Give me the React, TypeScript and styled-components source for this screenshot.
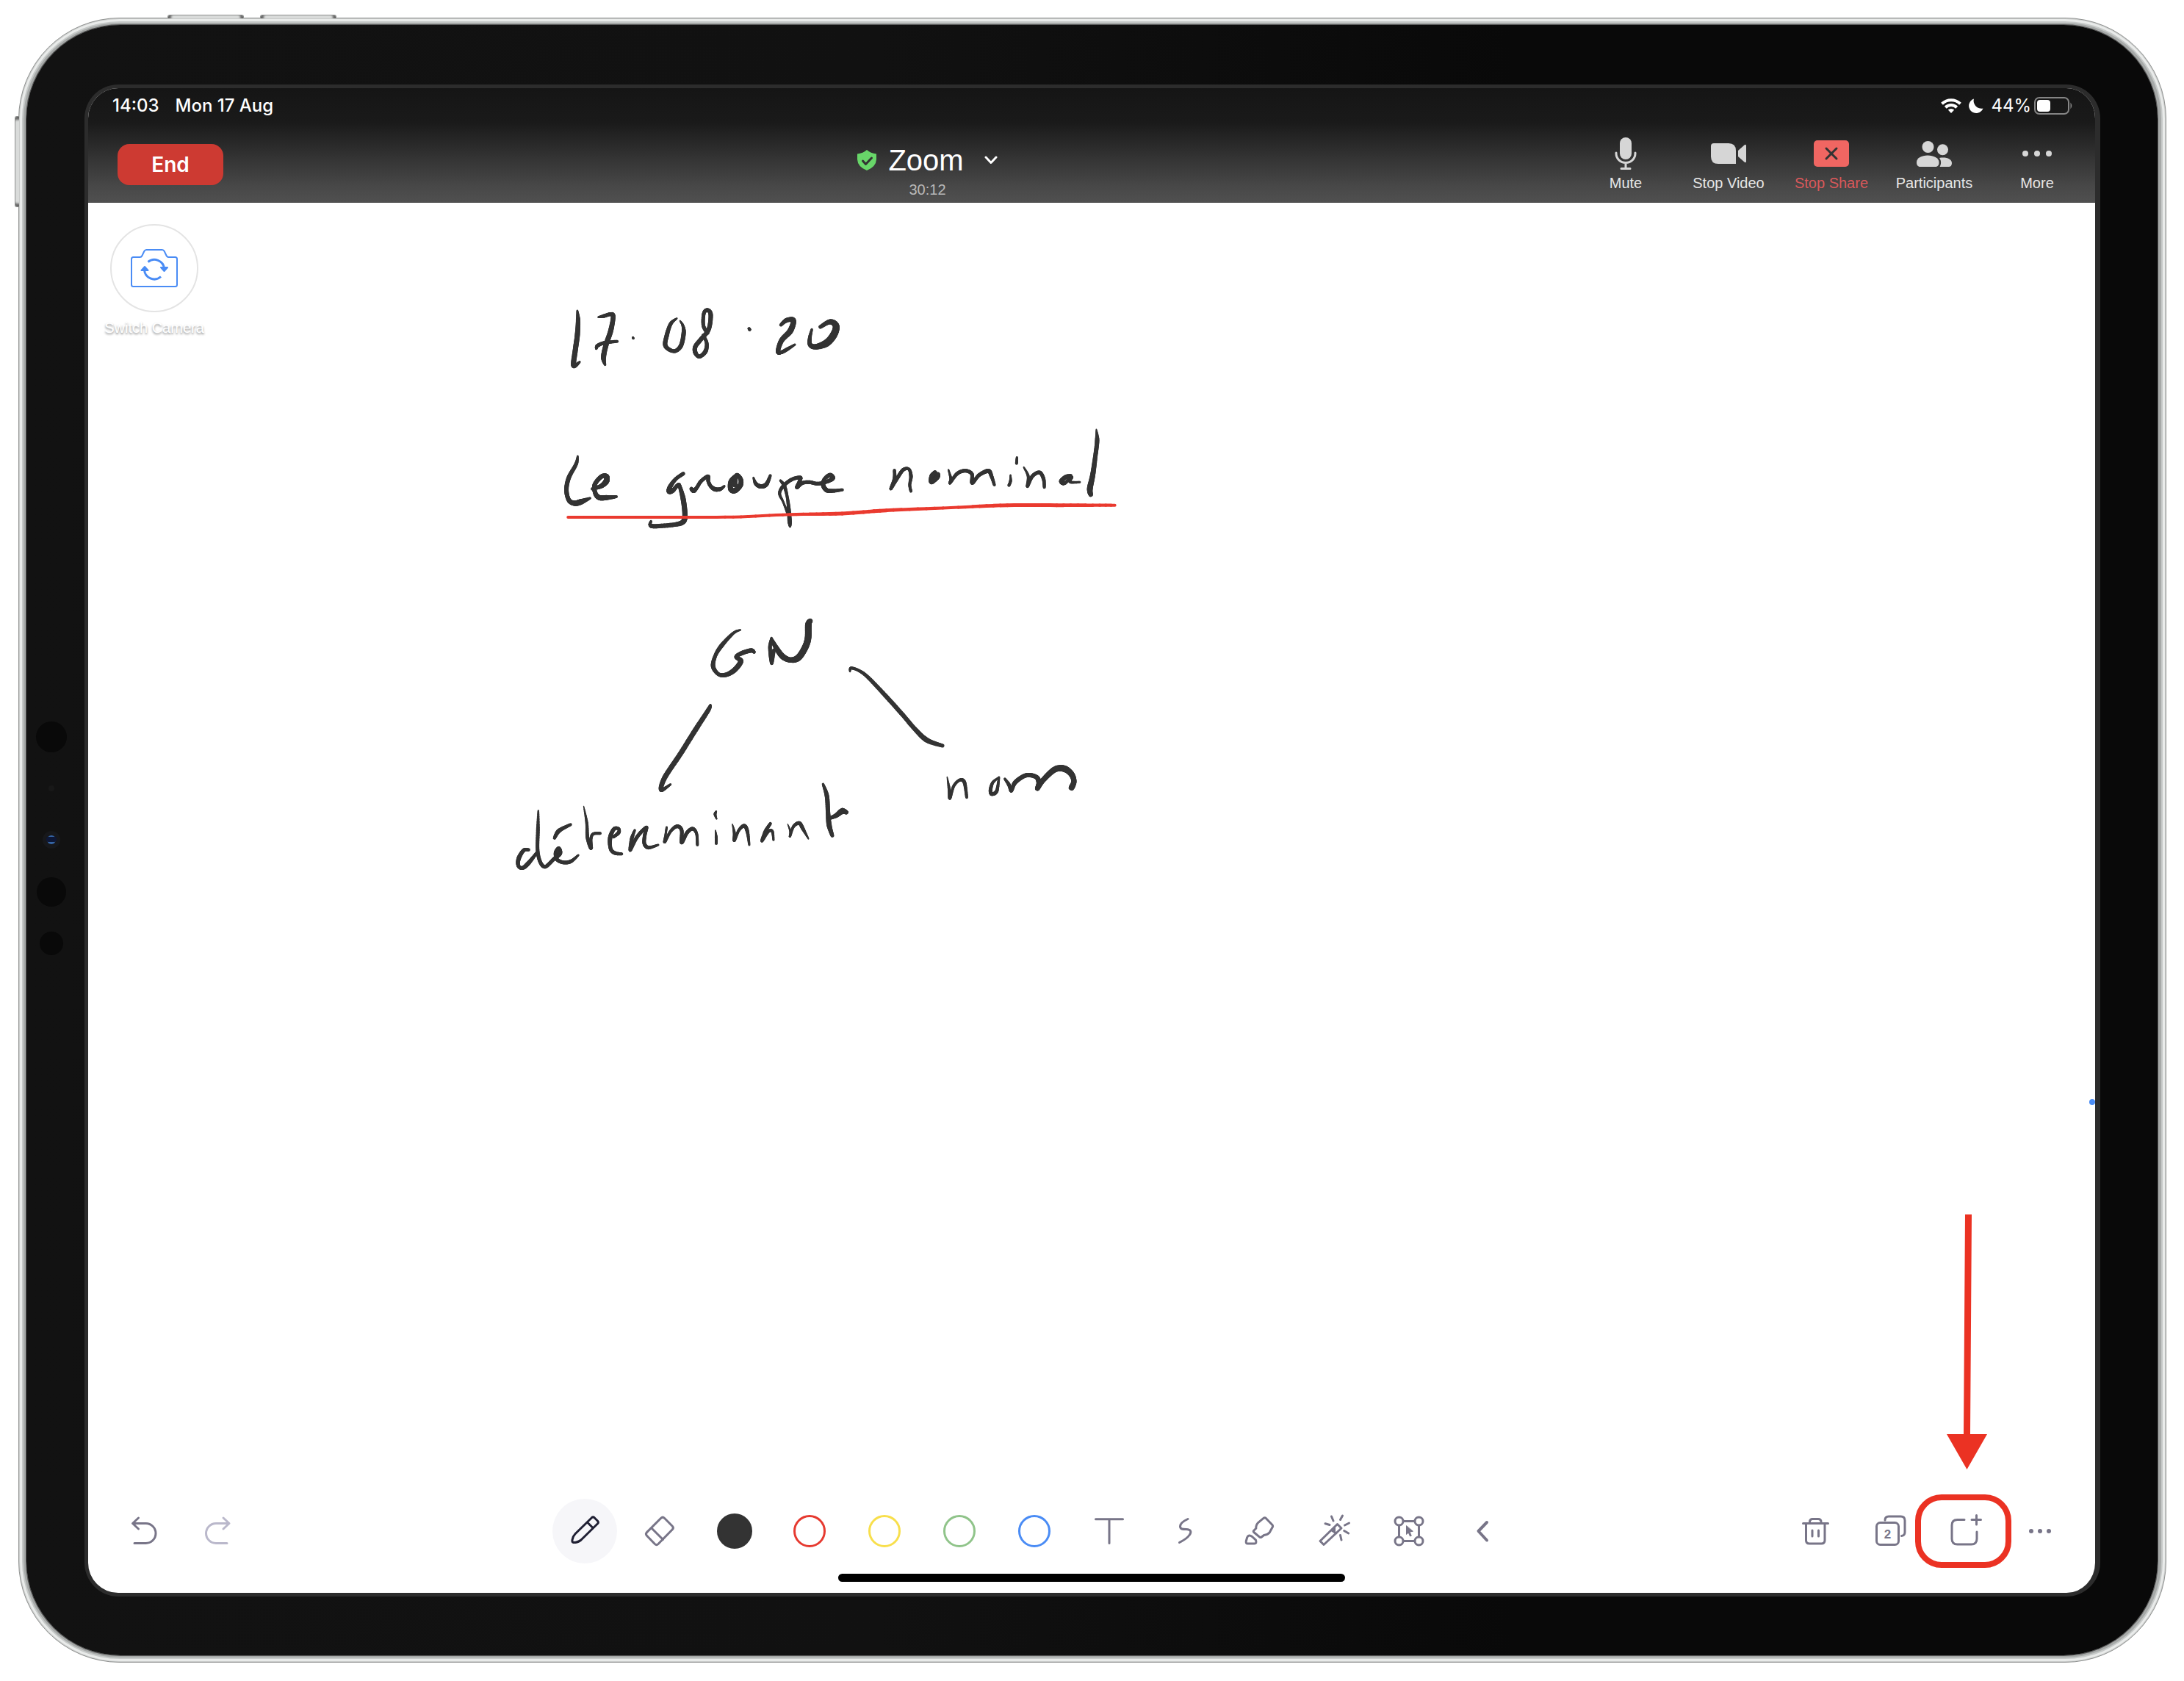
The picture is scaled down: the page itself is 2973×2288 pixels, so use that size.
import React from "react";
import styled, { createGlobalStyle } from "styled-components";

const GlobalStyle = createGlobalStyle`
  *, *::before, *::after { box-sizing: border-box; }
  body {
    margin: 0;
    background: #fff;
    font-family: "Liberation Sans", Arial, sans-serif;
  }
  button { font: inherit; color: inherit; background: none; border: 0; padding: 0; cursor: pointer; }
  svg { display: block; }
`;

const INK = "#333333";
const GREY = "#787588";
const BLUE = "#4a8cf5";
const MARK = "#eb3223";

/* ---------- device shell ---------- */

const Page = styled.div`
  min-height: 100vh;
  display: flex;
  padding: 24px 24px 25px 25px;
`;

const Device = styled.div`
  position: relative;
  flex: 1;
  display: flex;
  padding: 9px 11px 9px 10px;
  border: 1px solid #929493;
  border-radius: 138px;
  background: #a6a9a8;
  box-shadow: inset 0 0 0 1px #c9cbca, inset 0 0 0 4px #e9ebea, inset 0 0 0 6px #c6c9c8;
`;

const Bezel = styled.div`
  flex: 1;
  display: flex;
  padding: 81px 78px 80px 0;
  border-radius: 128px;
  background: linear-gradient(90deg, #121212 0%, #111 40%, #090909 70%);
  box-shadow: 0 0 0 1px #555;
`;

const SensorColumn = styled.div`
  width: 79px;
  display: flex;
  align-items: center;
  justify-content: center;
  padding: 0 12px 6px 0;
`;

const HardwareKey = styled.span<{ $side: "top" | "left"; $offset: number }>`
  position: absolute;
  border: 1px solid #8c8e8d;
  background: #d9dbda;
  ${(p) =>
    p.$side === "top"
      ? `top: -5px; left: ${p.$offset}px; width: 104px; height: 5px; border-radius: 3px 3px 0 0; border-bottom: 0; box-shadow: inset 7px 0 3px -3px #666, inset -7px 0 3px -3px #666;`
      : `left: -6px; top: ${p.$offset}px; width: 6px; height: 124px; border-radius: 3px 0 0 3px; border-right: 0; box-shadow: inset 0 7px 3px -3px #666, inset 0 -7px 3px -3px #666;`}
`;

const Screen = styled.main`
  flex: 1;
  min-width: 0;
  display: flex;
  flex-direction: column;
  border: 5px solid #2c2c2c;
  border-right-width: 7px;
  border-radius: 46px;
  background: #fff;
  overflow: hidden;
`;

/* ---------- top bars ---------- */

const Header = styled.header`
  color: #fff;
  background: linear-gradient(180deg, #151515 0%, #1a1a1a 30%, #363636 64%, #484848 86%, #505050 100%);
`;

const StatusBar = styled.div`
  height: 48px;
  display: flex;
  align-items: center;
  justify-content: space-between;
  padding: 0 30px 0 33px;
  font-family: Inter, "Liberation Sans", sans-serif;
  font-size: 24px;
  font-weight: 500;
  line-height: 24px;
`;

const StatusGroup = styled.div<{ $gap: number }>`
  display: flex;
  align-items: center;
  gap: ${(p) => p.$gap}px;
`;

const Percent = styled.span`
  margin-right: -6px;
  font-weight: 400;
`;

const NavBar = styled.nav`
  height: 108px;
  display: flex;
  align-items: center;
  padding: 3px 9px 0 40px;
`;

const EndButton = styled.button`
  width: 144px;
  height: 56px;
  margin-right: 78px;
  border-radius: 16px;
  background: #cd3a32;
  font-family: Inter, "Liberation Sans", sans-serif;
  font-size: 28px;
  font-weight: 600;
`;

const Meeting = styled.div`
  flex: 1;
  display: flex;
  flex-direction: column;
  align-items: center;
  gap: 8px;
  padding-top: 20px;
`;

const MeetingTitle = styled.button`
  display: flex;
  align-items: center;
  gap: 16px;
  font-size: 40px;
  line-height: 40px;
  svg:last-child { margin-left: 12px; }
`;

const Clock = styled.time`
  font-size: 20px;
  line-height: 24px;
  color: #b8b8b8;
`;

const NavTool = styled.button<{ $alert?: boolean }>`
  width: 140px;
  display: flex;
  flex-direction: column;
  align-items: center;
  gap: 6px;
  font-size: 20px;
  line-height: 24px;
  color: ${(p) => (p.$alert ? "#d9585a" : "#e6e6e6")};
`;

/* ---------- whiteboard ---------- */

const Board = styled.section`
  position: relative;
  flex: 1;
  padding: 29px 20px;
`;

const InkLayer = styled.svg`
  position: absolute;
  inset: 0;
  width: 100%;
  height: 100%;
  pointer-events: none;
`;

const CameraSwitch = styled.button`
  width: 140px;
  display: flex;
  flex-direction: column;
  align-items: center;
  gap: 9px;
  font-size: 20px;
  line-height: 24px;
  color: #fff;
  white-space: nowrap;
  text-shadow: 0 2px 3px rgba(0, 0, 0, 0.45);
`;

const CameraRing = styled.span`
  width: 120px;
  height: 120px;
  display: flex;
  align-items: center;
  justify-content: center;
  border: 2px solid #e4e4e4;
  border-radius: 50%;
`;

const EdgeDot = styled.span`
  position: absolute;
  right: 0;
  top: 1220px;
  width: 8px;
  height: 8px;
  border-radius: 50%;
  background: ${BLUE};
`;

const Pointer = styled.svg`
  position: absolute;
  right: 147px;
  bottom: 40px;
`;

/* ---------- bottom toolbar ---------- */

const Footer = styled.footer`
  display: flex;
  flex-direction: column;
  align-items: center;
  gap: 14px;
  padding-bottom: 15px;
`;

const Toolbar = styled.div`
  align-self: stretch;
  display: flex;
  padding: 0 31px 0 32px;
`;

const ToolGroup = styled.div<{ $main?: boolean }>`
  display: flex;
  gap: 14px;
  ${(p) => p.$main && "flex: 1; justify-content: center; padding-left: 47px;"}
`;

const Tool = styled.button<{ $active?: boolean }>`
  position: relative;
  width: 88px;
  height: 88px;
  display: flex;
  align-items: center;
  justify-content: center;
  border-radius: 50%;
  color: ${(p) => (p.$active ? "#1f1f33" : GREY)};
  background: ${(p) => (p.$active ? "#f6f6f9" : "transparent")};
  &:disabled { color: #bab8cb; }
`;

const Swatch = styled.span<{ $color: string; $filled?: boolean }>`
  width: ${(p) => (p.$filled ? 48 : 44)}px;
  height: ${(p) => (p.$filled ? 48 : 44)}px;
  border-radius: 50%;
  border: 3px solid ${(p) => p.$color};
  background: ${(p) => (p.$filled ? p.$color : "transparent")};
`;

const Highlight = styled.span`
  position: absolute;
  top: -6px;
  left: -24px;
  width: 131px;
  height: 100px;
  border: 8px solid ${MARK};
  border-radius: 36px;
`;

const HomeIndicator = styled.div`
  width: 690px;
  height: 11px;
  border-radius: 6px;
  background: #000;
`;

/* ---------- pen ink ---------- */

type Sample = [number, number, number];

/* Each stroke is "x,y,pressure" samples; the sheet maps pen samples to board pixels. */
interface Sheet {
  origin: [number, number];
  scale: [number, number];
  strokes: string[];
}

const heading: Sheet = {
  origin: [560, 124],
  scale: [1.823, 3],
  strokes: [
    "193,68,2 195,110,6 193,170,7 188,230,7 184,292,7 199,278,3",
    "245,95,2 260,90,5 275,83,5 282,92,6 276,150,7 264,210,7 258,260,7 262,290,3",
    "240,224,3 243,212,5 260,200,5 292,194,4",
    "331,178,3 332,182,3",
    "440,100,2 425,122,5 415,170,6 412,213,6 433,234,5 450,212,6 457,160,6 455,130,4 448,110,2",
    "516,160,5 506,130,5 507,80,5 516,66,5 524,85,6 519,145,6 500,185,6 486,215,6 486,240,6 496,256,5 511,235,6 514,200,5 505,168,4",
    "619,142,4 621,146,4",
    "698,127,4 712,108,6 729,108,7 722,150,8 700,190,7 691,235,6 700,238,5 715,225,5 733,207,3",
    "775,145,3 770,180,5 771,208,6 785,216,7 812,200,10 830,165,10 835,130,9 820,114,7 796,135,5",
    "194,662,2 190,695,5 172,750,6 166,800,6 172,842,6 186,855,7 202,849,8 225,834,3",
    "230,796,4 252,785,6 265,765,8 265,745,7 252,747,6 236,780,6 238,815,6 248,832,7 265,832,7 290,828,4",
    "456,734,5 438,755,5 424,785,6 421,806,7 430,803,6 443,780,5 448,790,5 456,840,7 460,900,7 456,930,7 435,942,6 385,949,6 374,943,5 376,928,3",
    "476,796,5 482,804,6 490,790,5 500,765,5 517,745,5 518,765,5 524,785,5 535,798,6 548,797,5 558,785,3",
    "588,740,5 574,765,6 574,798,7 585,803,7 598,780,7 598,755,6 588,740,5 584,780,7",
    "630,750,2 636,775,5 648,786,6 662,778,6 672,742,4",
    "697,762,3 707,785,5 714,830,4 718,880,5 720,930,6 721,950,3",
    "716,900,4 704,850,3 695,815,4 704,785,5 725,758,5 745,750,5 746,760,5 738,790,5 752,772,5 770,769,5 790,775,5 815,765,5 827,752,6 820,740,6 807,755,5 803,780,6 812,802,6 830,804,5 851,800,4",
    "980,720,4 980,755,5 971,796,4 988,750,5 1002,718,5 1016,716,4 1021,745,5 1018,780,4 1021,806,4",
    "1081,728,5 1073,745,7 1072,768,6 1086,748,7 1088,735,5",
    "1114,718,2 1120,755,4 1118,772,4 1135,735,5 1155,722,5 1172,735,5 1173,772,5 1190,740,5 1213,723,6 1221,745,5 1228,780,4",
    "1268,740,2 1268,765,4 1264,782,4",
    "1284,668,3 1283,692,4",
    "1301,708,2 1312,745,4 1310,786,4 1322,745,5 1340,729,5 1350,755,5 1352,790,4",
    "1418,742,4 1405,748,6 1394,765,6 1402,773,5 1420,748,4 1416,768,4 1440,769,3",
    "1481,553,1 1483,600,6 1478,670,6 1472,740,7 1465,795,8 1467,820,6",
  ],
};

const underline: Sheet = {
  origin: [560, 124],
  scale: [1.823, 3],
  strokes: ["170,912,4 400,912,4 580,911,4 720,901,4 850,897,5 960,884,5 1120,873,4 1260,863,5 1400,863,5 1527,863,4"],
};

const tree: Sheet = {
  origin: [560, 544],
  scale: [1.912, 3],
  strokes: [
    "627,112,2 608,126,4 577,178,6 561,220,5 556,262,6 570,293,5 590,295,6 612,275,7 628,240,7 616,222,5 632,206,6 655,196,6 663,203,4",
    "708,145,3 704,180,5 706,225,5 709,248,4 714,195,5",
    "708,150,4 722,190,7 738,222,8 758,235,7 778,225,9 795,185,9 803,145,9 804,90,9 809,75,6",
    "549,418,2 543,440,6 510,520,7 470,620,7 430,715,7 421,765,6 445,743,3",
    "912,282,2 915,268,4 935,278,4 960,307,5 1010,390,6 1050,460,6 1080,515,6 1112,562,7 1153,585,5",
    "76,1010,4 63,1012,5 50,1045,6 49,1075,5 60,1084,5 75,1065,6 98,1020,4",
    "101,850,2 100,930,5 99,1010,5 106,1060,5 119,1079,5 140,1050,5 157,1025,6 154,1004,5 146,1022,5 150,1050,5 168,1062,5 187,1056,5 205,1032,3",
    "143,962,4 155,932,6 185,907,4",
    "219,832,1 227,900,4 229,960,5 238,1003,5 238,965,4 244,945,4 262,943,4",
    "297,957,4 310,940,5 310,924,4 298,925,5 288,960,6 289,1005,5 300,1023,5 318,1027,4",
    "352,930,3 344,965,5 340,1012,4 355,965,5 370,935,5 383,918,4 378,950,5 377,985,5 388,1001,5 413,990,3",
    "435,918,3 432,950,3 430,978,4 445,935,4 462,914,5 474,930,5 474,980,5 488,940,5 503,924,5 513,945,4 515,990,4",
    "562,930,1 564,960,4 564,984,4",
    "564,853,2 561,865,4 565,884,2",
    "606,905,1 611,940,4 611,972,4 623,930,4 637,912,5 645,935,5 650,990,3",
    "705,903,4 692,935,5 683,974,4 700,935,4 710,935,4 713,970,3",
    "750,905,1 757,935,3 756,955,3 765,915,4 780,901,5 790,925,5 804,965,2",
    "842,742,3 852,790,6 855,860,6 858,910,7 866,952,5",
    "858,882,4 876,870,6 892,852,8 903,857,5 892,843,3",
    "1165,712,1 1170,760,4 1172,800,4 1182,750,4 1198,725,4 1210,735,5 1216,796,4",
    "1300,714,2 1284,735,4 1278,765,5 1281,782,5 1294,770,5 1300,714,3",
    "1315,720,3 1326,745,5 1332,770,4 1342,735,6 1370,706,6 1396,712,6 1404,735,7 1400,760,6 1415,725,7 1445,682,8 1470,679,9 1488,700,8 1495,730,7 1489,756,8",
  ],
};

const parse = (stroke: string, sheet: Sheet): Sample[] =>
  stroke.split(" ").map((s) => {
    const [x, y, w] = s.split(",").map(Number);
    return [sheet.origin[0] + x / sheet.scale[0], sheet.origin[1] + y / sheet.scale[1], w];
  });

const STEPS = 8;

/* Catmull-Rom interpolation keeps the pen line smooth between samples. */
const smooth = (pts: Sample[]): Sample[] => {
  const out: Sample[] = [];
  for (let i = 0; i < pts.length - 1; i++) {
    const a = pts[Math.max(i - 1, 0)];
    const b = pts[i];
    const c = pts[i + 1];
    const d = pts[Math.min(i + 2, pts.length - 1)];
    for (let k = 0; k < STEPS; k++) {
      const t = k / STEPS;
      const at = (n: 0 | 1) =>
        0.5 *
        (2 * b[n] +
          (c[n] - a[n]) * t +
          (2 * a[n] - 5 * b[n] + 4 * c[n] - d[n]) * t * t +
          (3 * b[n] - a[n] - 3 * c[n] + d[n]) * t * t * t);
      out.push([at(0), at(1), b[2] + (c[2] - b[2]) * t]);
    }
  }
  out.push(pts[pts.length - 1]);
  return out;
};

const Ink = ({ sheet, color }: { sheet: Sheet; color: string }) => (
  <g stroke={color} strokeLinecap="round">
    {sheet.strokes.map((stroke, i) => {
      const pts = smooth(parse(stroke, sheet));
      return (
        <g key={i}>
          {pts.slice(1).map((p, k) => (
            <line key={k} x1={pts[k][0]} y1={pts[k][1]} x2={p[0]} y2={p[1]} strokeWidth={p[2]} />
          ))}
        </g>
      );
    })}
  </g>
);

/* ---------- icons ---------- */

const ToolIcon = ({ children, width = 3 }: { children: React.ReactNode; width?: number }) => (
  <svg width="88" height="88" viewBox="0 0 88 88" fill="none" stroke="currentColor" strokeWidth={width} strokeLinecap="round" strokeLinejoin="round" aria-hidden="true">
    {children}
  </svg>
);

const NavIcon = ({ children }: { children: React.ReactNode }) => (
  <svg width="60" height="44" viewBox="0 0 60 44" fill="#d6d6d6" aria-hidden="true">
    {children}
  </svg>
);

const navTools = [
  {
    label: "Mute",
    icon: (
      <NavIcon>
        <rect x="22" y="0" width="16" height="30" rx="8" />
        <path d="M17 21v1a13 12.500 0 0 0 26 0v-1M30 35v7M24 42.500h12" fill="none" stroke="#d6d6d6" strokeWidth="3" strokeLinecap="round" />
      </NavIcon>
    ),
  },
  {
    label: "Stop Video",
    icon: (
      <NavIcon>
        <path d="M10 8h20q10 0 10 10v18H16q-10 0-10-10V12q0-4 4-4z" />
        <path d="M43 18l8.500-7.600q2.500-1.500 2.500 1v21.200q0 2.500-2.500 1L43 26z" />
      </NavIcon>
    ),
  },
  {
    label: "Stop Share",
    alert: true,
    icon: (
      <NavIcon>
        <rect x="6" y="4" width="48" height="36" rx="5" fill="#f06662" />
        <path d="M23 15l14 14M37 15L23 29" stroke="#333" strokeWidth="3" strokeLinecap="round" />
      </NavIcon>
    ),
  },
  {
    label: "Participants",
    icon: (
      <NavIcon>
        <circle cx="21.500" cy="13" r="8" />
        <circle cx="41.500" cy="16.700" r="7.500" />
        <path d="M6 34c0-6 7-9.500 15-9.500S36.500 28 36.500 34c0 3.500-1.500 6-5 6H11c-3.500 0-5-2.500-5-6z" />
        <path d="M37 28c9-1.500 17 1 17 7 0 3-1.500 5-4.500 5H37.500c2-3.500 2.500-8-.5-12z" />
      </NavIcon>
    ),
  },
  {
    label: "More",
    icon: (
      <NavIcon>
        <circle cx="14" cy="22" r="4" />
        <circle cx="30" cy="22" r="4" />
        <circle cx="46" cy="22" r="4" />
      </NavIcon>
    ),
  },
];

const swatches = [
  { name: "Black", color: INK, filled: true },
  { name: "Red", color: "#e63a30" },
  { name: "Yellow", color: "#f8df4c" },
  { name: "Green", color: "#90c48a" },
  { name: "Blue", color: BLUE },
];

const drawTools = [
  {
    name: "Text",
    icon: (
      <ToolIcon>
        <path d="M25.500 27.700H62.500M44 28V60.500" />
      </ToolIcon>
    ),
  },
  {
    name: "Curve",
    icon: (
      <ToolIcon>
        <path d="M49 27.500C42.500 30.500 38.500 34.500 38.500 37.500C38.500 41.500 42 41.500 47 41.600C53 41.800 54.500 45 51 49.500C47.500 54.500 43 56.500 37.500 59.500" />
      </ToolIcon>
    ),
  },
  {
    name: "Brush",
    icon: (
      <ToolIcon>
        <path d="M49.700 26.700q2-1.600 3.800 0l8.200 8.500q1.600 1.800.4 3.600l-4 7.200q-2.500 3-7.500 3.500l-3.600 2.800q-1.200.6-2 0L36.800 45.500q-1-1 0-2.200l3-3q-.3-5 3-8z" />
        <path d="M34.500 51.500l5 4.700q1.600 4.800-2 4.800H28.500q-3 0-2.200-3.500l1.400-5q2-4.500 6.800-1z" />
      </ToolIcon>
    ),
  },
  {
    name: "Magic wand",
    icon: (
      <ToolIcon>
        <path d="M48.500 34.500l5.500 5.500L30 62.500L25 57.500zM41 43l6 4M44.500 44.500v-6" />
        <path d="M40.500 24l2.500 6M55.500 23l-3 5.500M32 33.700l6 1.800M64.500 33l-6 3M57.700 43.500l6 3.500M52.500 49.500l1.500 6.500" />
      </ToolIcon>
    ),
  },
  {
    name: "Select",
    icon: (
      <ToolIcon>
        <path d="M36.500 30.500h15M36.500 57.500h15M30.500 36.500v15M57.500 36.500v15" />
        <circle cx="30.500" cy="30.500" r="5.500" />
        <circle cx="57.500" cy="30.500" r="5.500" />
        <circle cx="30.500" cy="57.500" r="5.500" />
        <circle cx="57.500" cy="57.500" r="5.500" />
        <path d="M40.500 37v11.500l2.800-2.500l2.200 5l1.800-.8l-2.300-5.200l4-.7z" fill="currentColor" strokeWidth="1" />
      </ToolIcon>
    ),
  },
  {
    name: "Collapse",
    icon: (
      <ToolIcon width={4}>
        <path d="M48 32L36.500 44L48 56.500" />
      </ToolIcon>
    ),
  },
];

export default function App() {
  return (
    <>
      <GlobalStyle />
      <Page>
        <Device>
          <HardwareKey $side="top" $offset={202} />
          <HardwareKey $side="top" $offset={328} />
          <HardwareKey $side="left" $offset={133} />
          <Bezel>
            <SensorColumn>
              <svg width="42" height="318" viewBox="0 0 42 318" aria-hidden="true">
                <circle cx="21" cy="21" r="21" fill="#090909" />
                <circle cx="21" cy="91" r="4" fill="#181818" />
                <circle cx="21" cy="161" r="12" fill="#17181b" />
                <circle cx="21" cy="161" r="6" fill="#3565a6" />
                <rect x="14" y="157" width="14" height="7" rx="3" fill="#0d1736" />
                <circle cx="21" cy="232" r="20" fill="#090909" />
                <circle cx="21" cy="302" r="16" fill="#090909" />
              </svg>
            </SensorColumn>
            <Screen>
              <Header>
                <StatusBar>
                  <StatusGroup $gap={22}>
                    <time>14:03</time>
                    <span>Mon 17 Aug</span>
                  </StatusGroup>
                  <StatusGroup $gap={10}>
                    <svg width="28" height="20" viewBox="0 0 28 20" fill="none" stroke="#fff" strokeWidth="4" aria-hidden="true">
                      <path d="M1.500 7.300a18 18 0 0 1 25 0M6.300 12.200a11 11 0 0 1 15.400 0" />
                      <path d="M9.800 15.600a6 6 0 0 1 8.400 0L14 20z" fill="#fff" stroke="none" />
                    </svg>
                    <svg width="20" height="20" viewBox="0 0 20 20" fill="#fff" aria-hidden="true">
                      <path d="M7 .5A10.500 10.500 0 0 0 19.500 13.500A10 10 0 1 1 7 .5z" />
                    </svg>
                    <Percent>44%</Percent>
                    <svg width="53" height="24" viewBox="0 0 53 24" aria-hidden="true">
                      <rect x="1" y="1" width="46" height="22" rx="6" fill="none" stroke="#858585" strokeWidth="2" />
                      <rect x="4" y="4" width="18" height="16" rx="4" fill="#fff" />
                      <path d="M49.500 7.500q3.500 4.500 0 9z" fill="#858585" />
                    </svg>
                  </StatusGroup>
                </StatusBar>
                <NavBar>
                  <EndButton>End</EndButton>
                  <Meeting>
                    <MeetingTitle>
                      <svg width="26" height="28" viewBox="0 0 26 28" aria-hidden="true">
                        <path d="M13 0Q18 4.500 26 5.500V13Q25.500 23 13 28Q.5 23 0 13V5.500Q8 4.500 13 0z" fill="#68d669" />
                        <path d="M7.500 15l4 4.500L19.500 11" fill="none" stroke="#333" strokeWidth="3" strokeLinecap="round" strokeLinejoin="round" />
                      </svg>
                      Zoom
                      <svg width="18" height="12" viewBox="0 0 18 12" fill="none" stroke="#fff" strokeWidth="3" strokeLinecap="round" strokeLinejoin="round" aria-hidden="true">
                        <path d="M2 2l7 7.500L16 2" />
                      </svg>
                    </MeetingTitle>
                    <Clock>30:12</Clock>
                  </Meeting>
                  {navTools.map((t) => (
                    <NavTool key={t.label} $alert={t.alert}>
                      {t.icon}
                      <span>{t.label}</span>
                    </NavTool>
                  ))}
                </NavBar>
              </Header>

              <Board>
                <InkLayer role="img" aria-label="17.08.20, Le groupe nominal: GN, déterminant, nom">
                  <Ink sheet={heading} color={INK} />
                  <Ink sheet={underline} color="#ea3a2f" />
                  <Ink sheet={tree} color={INK} />
                </InkLayer>
                <CameraSwitch>
                  <CameraRing>
                    <svg width="64" height="52" viewBox="0 0 64 52" fill="none" stroke={BLUE} strokeWidth="2" strokeLinejoin="round" aria-hidden="true">
                      <path d="M3.500 11H12.500q2 0 2.800-1.700l3-6.300q1-2 3-2H42.700q2 0 3 2l3 6.300q.8 1.700 2.800 1.700H60.500q2.500 0 2.500 2.500V48.500q0 2.500-2.500 2.500H3.500q-2.500 0-2.500-2.500V13.500q0-2.500 2.500-2.500z" />
                      <path d="M23.500 17.500A13.500 13.500 0 0 1 45.500 26M41 37.500A13.500 13.500 0 0 1 18.500 28" strokeWidth="3" />
                      <path d="M41 25h9l-4.500 5zM14.500 29h9l-4.500-5z" fill={BLUE} />
                    </svg>
                  </CameraRing>
                  Switch Camera
                </CameraSwitch>
                <EdgeDot />
                <Pointer width="55" height="347" viewBox="0 0 55 347" fill={MARK} aria-hidden="true">
                  <path d="M25 0h9l-2 299h23L27.500 347L0 299h23z" />
                </Pointer>
              </Board>

              <Footer>
                <Toolbar>
                  <ToolGroup>
                    <Tool aria-label="Undo">
                      <ToolIcon>
                        <path d="M36.500 26L28.500 33.500L36.500 41M29 33.500H46.500a13.500 13.500 0 0 1 0 27H31" />
                      </ToolIcon>
                    </Tool>
                    <Tool aria-label="Redo" disabled>
                      <ToolIcon>
                        <path d="M50 26L58 33.500L50 41M57.500 33.500H40a13.500 13.500 0 0 0 0 27H55" />
                      </ToolIcon>
                    </Tool>
                  </ToolGroup>
                  <ToolGroup $main>
                    <Tool aria-label="Pencil" $active>
                      <ToolIcon>
                        <path d="M28.500 59.500q-2-.5-1.500-3.500q.8-5 4-8.300L53.500 25.700q1.800-1.600 3.600 0l4.500 4.500q1.600 1.800 0 3.600L39 56q-4 3.500-10.500 3.500zM47.500 32l7.500 7.500" />
                      </ToolIcon>
                    </Tool>
                    <Tool aria-label="Eraser">
                      <ToolIcon>
                        <path d="M45.800 26.300q2.300-2.200 4.600 0L61.300 37.200q2.200 2.300 0 4.600L42 61.500q-2.300 2.200-4.600 0L26.500 50.200q-2.200-2.300 0-4.600zM33 40L48.500 55.500" />
                      </ToolIcon>
                    </Tool>
                    {swatches.map((s) => (
                      <Tool key={s.name} aria-label={s.name}>
                        <Swatch $color={s.color} $filled={s.filled} />
                      </Tool>
                    ))}
                    {drawTools.map((t) => (
                      <Tool key={t.name} aria-label={t.name}>
                        {t.icon}
                      </Tool>
                    ))}
                  </ToolGroup>
                  <ToolGroup>
                    <Tool aria-label="Delete">
                      <ToolIcon>
                        <path d="M27.500 33.500h34M36.500 33v-1.500q0-4 4-4h7.500q4 0 4 4V33M31.500 34v22.500q0 4.500 4.500 4.500h16.500q4.500 0 4.500-4.500V34M40 43v8M48.500 43v8" />
                      </ToolIcon>
                    </Tool>
                    <Tool aria-label="Pages">
                      <ToolIcon>
                        <rect x="25.500" y="32.500" width="30" height="30" rx="5" />
                        <path d="M37 29q0-5 5-5h16.500q5.500 0 5.500 5.500V45.500q0 4.500-4.500 5" />
                        <text x="40.500" y="53.500" textAnchor="middle" fill="currentColor" stroke="none" fontSize="17" fontWeight="700">2</text>
                      </ToolIcon>
                    </Tool>
                    <Tool aria-label="New page">
                      <ToolIcon>
                        <path d="M43 28.500H33.500q-7.500 0-7.500 7.500V54.500q0 7.500 7.500 7.500H52.500q7.500 0 7.500-7.500V45M59.500 22.500v12.500M53 28.500h12.500" />
                      </ToolIcon>
                      <Highlight />
                    </Tool>
                    <Tool aria-label="More tools">
                      <ToolIcon>
                        <g fill="currentColor" stroke="none">
                          <circle cx="32" cy="44" r="3" />
                          <circle cx="44" cy="44" r="3" />
                          <circle cx="56" cy="44" r="3" />
                        </g>
                      </ToolIcon>
                    </Tool>
                  </ToolGroup>
                </Toolbar>
                <HomeIndicator />
              </Footer>
            </Screen>
          </Bezel>
        </Device>
      </Page>
    </>
  );
}
